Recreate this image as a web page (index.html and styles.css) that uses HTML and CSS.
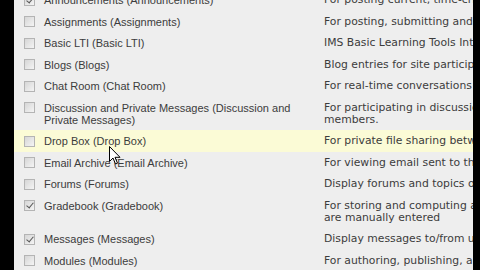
FILE: index.html
```html
<!DOCTYPE html>
<html lang="en">
<head>
    <meta charset="UTF-8">
    <title>Site Tools</title>
    <link rel="stylesheet" href="styles.css">
</head>
<body>
    <div class="frame">
        <div class="page">
            <table class="tools">
                <tr>
                    <td class="check"><input type="checkbox" checked></td>
                    <td class="name">Announcements (Announcements)</td>
                    <td class="desc">For posting current, time-critical information</td>
                </tr>
                <tr>
                    <td class="check"><input type="checkbox"></td>
                    <td class="name">Assignments (Assignments)</td>
                    <td class="desc">For posting, submitting and grading assignments</td>
                </tr>
                <tr>
                    <td class="check"><input type="checkbox"></td>
                    <td class="name">Basic LTI (Basic LTI)</td>
                    <td class="desc">IMS Basic Learning Tools Interoperability</td>
                </tr>
                <tr>
                    <td class="check"><input type="checkbox"></td>
                    <td class="name">Blogs (Blogs)</td>
                    <td class="desc">Blog entries for site participants</td>
                </tr>
                <tr>
                    <td class="check"><input type="checkbox"></td>
                    <td class="name">Chat Room (Chat Room)</td>
                    <td class="desc">For real-time conversations in written form</td>
                </tr>
                <tr>
                    <td class="check"><input type="checkbox"></td>
                    <td class="name">Discussion and Private Messages (Discussion and Private Messages)</td>
                    <td class="desc">For participating in discussions with site<br>members.</td>
                </tr>
                <tr class="hover">
                    <td class="check"><input type="checkbox"></td>
                    <td class="name">Drop Box (Drop Box)</td>
                    <td class="desc">For private file sharing between users</td>
                </tr>
                <tr>
                    <td class="check"><input type="checkbox"></td>
                    <td class="name">Email Archive (Email Archive)</td>
                    <td class="desc">For viewing email sent to the site</td>
                </tr>
                <tr>
                    <td class="check"><input type="checkbox"></td>
                    <td class="name">Forums (Forums)</td>
                    <td class="desc">Display forums and topics of discussion</td>
                </tr>
                <tr>
                    <td class="check"><input type="checkbox" checked></td>
                    <td class="name">Gradebook (Gradebook)</td>
                    <td class="desc">For storing and computing assessment grades that<br>are manually entered</td>
                </tr>
                <tr>
                    <td class="check"><input type="checkbox" checked></td>
                    <td class="name">Messages (Messages)</td>
                    <td class="desc">Display messages to/from users</td>
                </tr>
                <tr>
                    <td class="check"><input type="checkbox"></td>
                    <td class="name">Modules (Modules)</td>
                    <td class="desc">For authoring, publishing, and sharing content</td>
                </tr>
            </table>

            <!-- mouse pointer resting on the Drop Box row -->
            <svg class="cursor" width="12" height="19" viewBox="0 0 12 19">
                <path d="M0.5 0.5 L0.5 15.5 L4 12 L6.5 18 L8.5 17.2 L6 11.3 L11 11.3 Z" fill="#fff" stroke="#000" stroke-width="1" stroke-linejoin="round"/>
            </svg>
        </div>
    </div>
</body>
</html>
```

FILE: styles.css
```css
* {
    margin: 0;
    padding: 0;
    box-sizing: border-box;
}

body {
    background-color: black;
    height: 100vh;
    overflow: hidden;
}

.frame {
    height: 100%;
    padding: 0 7px 0 14px;
}

.page {
    position: relative;
    height: 100%;
    background-color: #eeeeee;
    overflow: hidden;
}

.tools {
    border-collapse: collapse;
    table-layout: fixed;
    margin-top: -11px;
    width: 600px;
    color: #3c3c3c;
}

.tools td {
    vertical-align: top;
    padding: 5px 0 4.5px 0;
    line-height: 12px;
}

.tools tr.hover td {
    background-color: #fbfbd6;
}

.check {
    width: 30px;
    padding-left: 10px !important;
}

.check input {
    display: block;
    width: 11px;
    height: 11px;
    margin-top: 0.5px;
    appearance: none;
    border: 1px solid #b4b4b4;
    background: linear-gradient(135deg, #d6d6d6, #f4f4f4);
    position: relative;
}

.check input:checked::after {
    content: "";
    position: absolute;
    left: 3px;
    top: 0px;
    width: 3px;
    height: 6px;
    border: solid #555;
    border-width: 0 1.5px 1.5px 0;
    transform: rotate(40deg);
}

.name {
    width: 280px;
    padding-right: 8px !important;
    font-family: "Liberation Sans", Arial, sans-serif;
    font-size: 11px;
}

.desc {
    width: 290px;
    font-family: "DejaVu Sans", Verdana, sans-serif;
    font-size: 10.8px;
    white-space: nowrap;
}

.cursor {
    position: absolute;
    left: 95px;
    top: 146px;
}
```
